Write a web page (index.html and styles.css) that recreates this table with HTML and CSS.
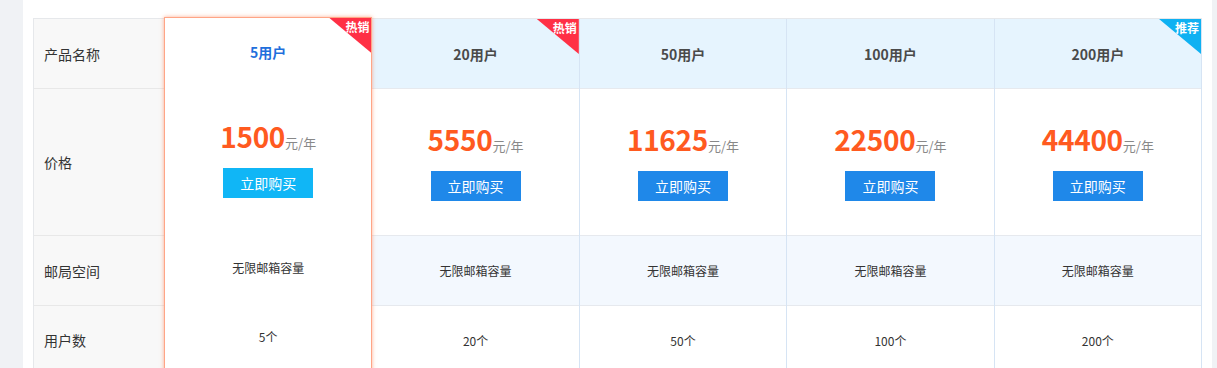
FILE: index.html
```html
<!DOCTYPE html>
<html lang="zh-CN">
<head>
<meta charset="utf-8">
<title>价格</title>
<link rel="stylesheet" href="styles.css">
</head>
<body>
<div class="page">
  <div class="side"></div>
  <div class="panel">
    <div class="table">
      <div class="col label-col">
        <div class="cell head">产品名称</div>
        <div class="cell price">价格</div>
        <div class="cell space">邮局空间</div>
        <div class="cell users">用户数</div>
      </div>

      <div class="col plan featured">
        <div class="cell head"><span class="name">5用户</span><span class="ribbon hot"><span class="ribbon-text">热销</span></span></div>
        <div class="cell price">
          <div class="amount"><span class="num">1500</span><span class="unit">元/年</span></div>
          <a class="buy">立即购买</a>
        </div>
        <div class="cell space">无限邮箱容量</div>
        <div class="cell users">5个</div>
      </div>

      <div class="col plan">
        <div class="cell head"><span class="name">20用户</span><span class="ribbon hot"><span class="ribbon-text">热销</span></span></div>
        <div class="cell price">
          <div class="amount"><span class="num">5550</span><span class="unit">元/年</span></div>
          <a class="buy">立即购买</a>
        </div>
        <div class="cell space">无限邮箱容量</div>
        <div class="cell users">20个</div>
      </div>

      <div class="col plan">
        <div class="cell head"><span class="name">50用户</span></div>
        <div class="cell price">
          <div class="amount"><span class="num">11625</span><span class="unit">元/年</span></div>
          <a class="buy">立即购买</a>
        </div>
        <div class="cell space">无限邮箱容量</div>
        <div class="cell users">50个</div>
      </div>

      <div class="col plan">
        <div class="cell head"><span class="name">100用户</span></div>
        <div class="cell price">
          <div class="amount"><span class="num">22500</span><span class="unit">元/年</span></div>
          <a class="buy">立即购买</a>
        </div>
        <div class="cell space">无限邮箱容量</div>
        <div class="cell users">100个</div>
      </div>

      <div class="col plan">
        <div class="cell head"><span class="name">200用户</span><span class="ribbon rec"><span class="ribbon-text">推荐</span></span></div>
        <div class="cell price">
          <div class="amount"><span class="num">44400</span><span class="unit">元/年</span></div>
          <a class="buy">立即购买</a>
        </div>
        <div class="cell space">无限邮箱容量</div>
        <div class="cell users">200个</div>
      </div>
    </div>
  </div>
  <div class="side-right"></div>
</div>
</body>
</html>
```

FILE: styles.css
```css
* { box-sizing: border-box; }
html, body {
  margin: 0;
  padding: 0;
  height: 368px;
  overflow: hidden;
  background: #f0f2f5;
  font-family: "Noto Sans CJK SC", "Noto Sans", sans-serif;
  color: #333;
}
.page {
  display: flex;
  height: 368px;
}
.side {
  width: 23px;
  flex: none;
  background: #f0f2f5;
}
.side-right {
  width: 5px;
  flex: none;
  background: #f0f2f5;
}
.panel {
  flex: 1;
  background: #fff;
  padding: 18px 10px 0 10px;
  overflow: hidden;
}
.table {
  display: flex;
  border-top: 1px solid #e6e8eb;
  border-left: 1px solid #e6e8eb;
  height: 400px;
}
.col {
  display: flex;
  flex-direction: column;
}
.label-col {
  width: 131px;
  flex: none;
  background: #f8f8f8;
}
.plan {
  flex: 1;
  min-width: 0;
  border-right: 1px solid #d6e4f4;
  text-align: center;
}
.cell {
  border-bottom: 1px solid #e6e9ee;
  display: flex;
  flex-direction: column;
  justify-content: center;
}
.label-col .cell {
  padding-left: 10px;
  font-size: 14px;
  line-height: 20px;
  color: #333;
  border-bottom-color: #e8e8e8;
}
.label-col .users { padding-bottom: 2px; }
.head { height: 70px; position: relative; }
.price { height: 147px; }
.space { height: 70px; }
.users { height: 70px; }

.plan .cell { align-items: center; }
.plan .head { background: #e6f4fe; }
.plan .price { padding-bottom: 2px; }
.plan .space { background: #f3f8fe; font-size: 12px; line-height: 16px; padding-top: 1px; }
.plan .users { font-size: 12px; line-height: 16px; }

.name {
  font-size: 14px;
  font-weight: bold;
  line-height: 20px;
  color: #4a4a4a;
}

.amount {
  display: flex;
  align-items: baseline;
  line-height: 34px;
}
.num {
  font-size: 28px;
  font-weight: bold;
  color: #ff5a1f;
  letter-spacing: -0.3px;
}
.unit {
  font-size: 13px;
  color: #888;
}
.buy {
  margin-top: 8px;
  width: 90px;
  height: 30px;
  line-height: 30px;
  background: #1f88e9;
  color: #fff;
  font-size: 14px;
  text-align: center;
  cursor: pointer;
}

.featured {
  margin-top: -2px;
  border: 1px solid #ffa586;
  background: #fff;
  box-shadow: 0 0 4px rgba(255, 120, 70, 0.6);
  position: relative;
  z-index: 1;
  margin-left: -1px;
}
.featured .head,
.featured .space,
.featured .users { background: #fff; }
.featured .cell { border-bottom-color: transparent; }
.featured .head { height: 69px; }
.featured .price { height: 146px; padding-bottom: 3px; }
.featured .users { padding-bottom: 2px; }
.featured .name { color: #1f6fdc; }
.featured .buy { background: #10b6f6; }

.ribbon {
  position: absolute;
  top: 0;
  right: 0;
  width: 42px;
  height: 35px;
  clip-path: polygon(0 0, 100% 0, 100% 100%);
}
.ribbon.hot { background: #ff3045; }
.ribbon.rec { background: #0fb1f2; }
.ribbon-text {
  position: absolute;
  top: 2px;
  right: 2px;
  font-size: 12px;
  line-height: 14px;
  font-weight: bold;
  color: #fff;
}
```
